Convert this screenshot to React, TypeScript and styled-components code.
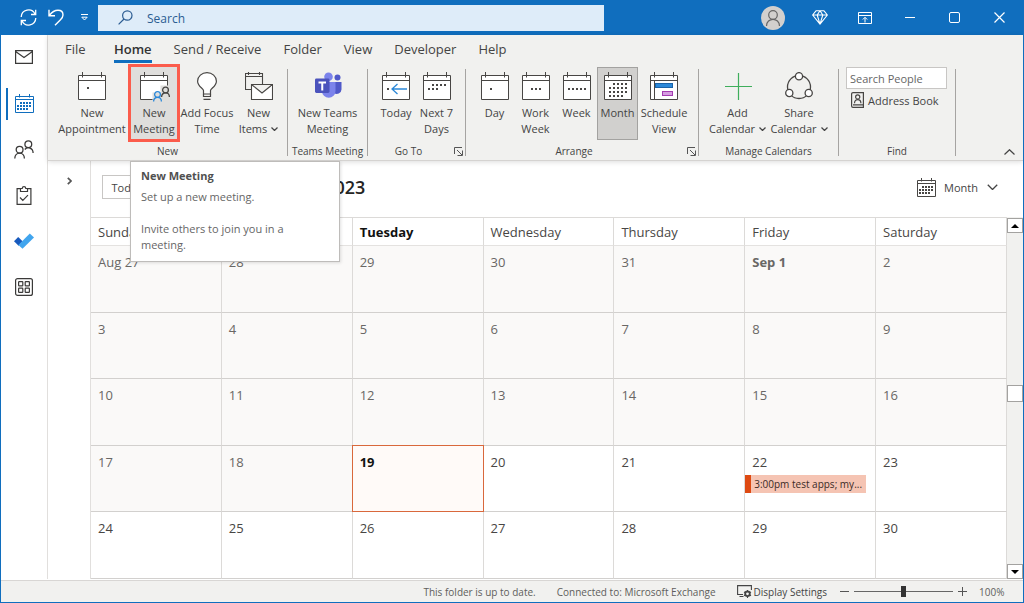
import React from "react";
import styled, { createGlobalStyle, css } from "styled-components";

const GlobalStyle = createGlobalStyle`
  *, *::before, *::after { box-sizing: border-box; }
  body { margin: 0; font-family: "Open Sans", "Noto Sans", sans-serif; font-size: 11px; color: #444; }
  button, input, select { font: inherit; color: inherit; margin: 0; padding: 0; border: 0; background: none; }
  svg { display: block; flex: none; }
`;

const Window = styled.div`
  display: flex;
  flex-direction: column;
  height: 100vh;
  min-height: 520px;
  overflow: hidden;
  border: 1px solid #106ebe;
  border-top: 0;
  background: #fff;
`;

/* ---------- title bar ---------- */

const TitleBar = styled.header`
  display: flex;
  align-items: center;
  flex: none;
  height: 35px;
  padding: 0 1px 0 13px;
  background: #106ebe;
  color: #fff;
`;

const QuickButton = styled.button`
  display: grid;
  place-items: center;
  width: 28px;
  height: 28px;
`;

const SearchBox = styled.label`
  display: flex;
  align-items: center;
  gap: 14px;
  flex: 0 1 506px;
  height: 26px;
  padding-left: 20px;
  background: #deecf9;
  color: #2b5c92;
  font-size: 12px;

  input { flex: 1; min-width: 0; padding-top: 2px; outline: 0; }
  input::placeholder { color: #2b5c92; opacity: 1; }
`;

const WindowControls = styled.div`
  display: flex;
  margin-left: auto;
`;

const ControlButton = styled.button<{ $avatar?: boolean }>`
  display: grid;
  place-items: center;
  width: 45px;
  height: 34px;
  ${(p) => p.$avatar && css`margin-right: 2px;`}
`;

/* ---------- main regions ---------- */

const Body = styled.div`
  display: flex;
  flex: 1;
  min-height: 0;
`;

const Rail = styled.nav`
  display: flex;
  flex-direction: column;
  flex: none;
  width: 47px;
  border-right: 1px solid #e1dfdd;
`;

const RailButton = styled.button<{ $active?: boolean }>`
  && { padding-bottom: 2px; }
  position: relative;
  display: grid;
  place-items: center;
  height: 46px;
  ${(p) => p.$active && css`
    &::before {
      content: "";
      position: absolute;
      left: 5px;
      top: 7px;
      width: 2px;
      height: 32px;
      background: #106ebe;
    }
  `}
`;

const Content = styled.div`
  display: flex;
  flex-direction: column;
  flex: 1;
  min-width: 0;
`;

/* ---------- ribbon ---------- */

const Ribbon = styled.section`
  position: relative;
  z-index: 1;
  flex: none;
  height: 126px;
  background: #f1f1ef;
  border-bottom: 1px solid #d5d3d1;
  box-shadow: 0 1px 5px rgba(0, 0, 0, 0.14);
`;

const Tabs = styled.div`
  display: flex;
  gap: 22px;
  height: 32px;
  padding-left: 17px;
`;

const Tab = styled.button<{ $active?: boolean }>`
  && { padding-top: 3px; border-bottom: 3px solid ${(p) => (p.$active ? "#106ebe" : "transparent")}; }
  height: 28px;
  min-width: 27px;
  font-size: 13px;
  line-height: 20px;
  text-align: left;
  ${(p) => p.$active && css`
    && { font-weight: 600; color: #333; }
  `}
`;

const Groups = styled.div`
  display: flex;
`;

const Group = styled.div`
  display: flex;
  flex-direction: column;
  justify-content: space-between;
  height: 92px;
`;

const Tools = styled.div<{ $end?: number }>`
  display: flex;
  padding: 0 ${(p) => p.$end ?? 8}px 0 8px;
`;

const Divider = styled.div`
  flex: none;
  width: 1px;
  height: 87px;
  margin-top: 2px;
  background: #a6a4a2;
`;

const GroupFooter = styled.div`
  display: flex;
  align-items: center;
  height: 16px;
  font-size: 10px;
  span { flex: 1; text-align: center; white-space: nowrap; }
`;

const Launcher = styled.button`
  && { padding-right: 2px; }
  display: grid;
  justify-items: end;
  align-items: center;
  width: 16px;
  height: 12px;
`;

const ToolSlot = styled.div`
  position: relative;
`;

const Tool = styled.button<{ $w: number; $pressed?: boolean; $marked?: boolean }>`
  && { padding-top: 5px; }
  position: relative;
  display: flex;
  flex-direction: column;
  align-items: center;
  gap: 5px;
  width: ${(p) => p.$w}px;
  height: 73px;
  line-height: 16px;
  white-space: nowrap;
  ${(p) => p.$pressed && css`
    && { background: #d1d0ce; box-shadow: inset 0 0 0 1px #a3a2a0; }
  `}
  ${(p) => p.$marked && css`
    && { background: #dfdedc; }
    &::after {
      content: "";
      position: absolute;
      inset: -3px 0 -2px;
      border: 3px solid #fb5c4c;
    }
  `}
`;

const ToolLabel = styled.span`
  display: flex;
  flex-direction: column;
  align-items: center;
`;

const WithArrow = styled.span`
  display: flex;
  align-items: center;
  gap: 4px;
`;

const Tooltip = styled.div`
  position: absolute;
  top: 94px;
  left: 2px;
  width: 210px;
  height: 101px;
  padding: 6px 10px;
  background: #fff;
  border: 1px solid #bebcba;
  box-shadow: 1px 1px 3px rgba(0, 0, 0, 0.12);
  line-height: 16px;
  color: #666;
  h2 { margin: 0 0 5px; font-size: 11px; line-height: 16px; font-weight: 700; color: #505050; }
  p { margin: 0 0 16px; }
`;

const FindTools = styled.div`
  display: flex;
  flex-direction: column;
  align-items: flex-start;
  gap: 2px;
  width: 116px;
  padding: 0 8px 0 7px;
`;

const PeopleInput = styled.input`
  && {
    width: 101px;
    height: 22px;
    padding: 0 3px;
    background: #fff;
    border: 1px solid #c8c6c4;
  }
  &::placeholder { color: #666; opacity: 1; }
`;

const AddressButton = styled.button`
  && { padding-left: 5px; }
  display: flex;
  align-items: center;
  gap: 4px;
  height: 18px;
  white-space: nowrap;
`;

const CollapseButton = styled.button`
  && { margin-left: auto; }
  align-self: flex-end;
  width: 28px;
  height: 14px;
  display: grid;
  place-items: center;
`;

/* ---------- calendar ---------- */

const Main = styled.main`
  display: flex;
  flex: 1;
  min-height: 0;
`;

const FolderPane = styled.div`
  flex: none;
  width: 43px;
  border-right: 1px solid #e1dfdd;
`;

const ExpandButton = styled.button`
  display: grid;
  place-items: center;
  width: 100%;
  height: 40px;
`;

const Calendar = styled.div`
  display: flex;
  flex-direction: column;
  flex: 1;
  min-width: 0;
`;

const CalendarBar = styled.div`
  display: flex;
  align-items: center;
  flex: none;
  height: 56px;
  padding: 0 25px 4px 11px;
`;

const TodayButton = styled.button`
  && { border: 1px solid #c8c6c4; }
  width: 50px;
  height: 24px;
`;

const StepButton = styled.button`
  display: grid;
  place-items: center;
  width: 28px;
  height: 24px;
`;

const Heading = styled.h1`
  margin: 0 0 0 16px;
  font-size: 18px;
  line-height: 24px;
  font-weight: 600;
  color: #252423;
`;

const ViewPicker = styled.label`
  display: flex;
  align-items: center;
  gap: 8px;
  margin-left: auto;
  select { appearance: none; width: 35px; outline: 0; }
`;

const GridArea = styled.div`
  display: flex;
  flex: 1;
  min-height: 0;
`;

const MonthTable = styled.table`
  flex: 1;
  width: 100%;
  height: 100%;
  table-layout: fixed;
  border-collapse: separate;
  border-spacing: 0;
  border-top: 1px solid #dcdad8;
  font-size: 13px;
  line-height: 20px;
`;

const DayName = styled.th<{ $today?: boolean }>`
  height: 28px;
  padding: 1px 7px 0;
  border-right: 1px solid #dcdad8;
  border-bottom: 1px solid #e4e2e0;
  text-align: left;
  font-weight: ${(p) => (p.$today ? 700 : 400)};
  color: ${(p) => (p.$today ? "#111" : "#484644")};
`;

type CellKind = "past" | "today" | "future";

const DayCell = styled.td<{ $kind: CellKind; $bold?: boolean }>`
  position: relative;
  height: 66px;
  padding: 6px 0 0;
  border-right: 1px solid #dcdad8;
  border-bottom: 1px solid #d2d0ce;
  vertical-align: top;
  background: ${(p) => ({ past: "#faf9f8", today: "#fffaf8", future: "#fff" })[p.$kind]};
  color: ${(p) => ({ past: "#696765", today: "#111", future: "#484644" })[p.$kind]};
  font-weight: ${(p) => (p.$bold ? 700 : 400)};
  ${(p) => p.$kind === "today" && css`
    &::after {
      content: "";
      position: absolute;
      inset: -1px;
      border: 1px solid #d9683c;
    }
  `}
`;

const DayNumber = styled.div`
  padding-left: 7px;
`;

const EventButton = styled.button`
  && { border-left: 6px solid #de4a12; padding: 0 3px; background: #f5c4b3; }
  display: block;
  width: calc(100% - 9px);
  height: 18px;
  margin-top: 3px !important;
  overflow: hidden;
  text-overflow: ellipsis;
  white-space: nowrap;
  && { font-size: 10px; color: #3b2a25; }
  line-height: 16px;
  text-align: left;
`;

const ScrollBar = styled.div`
  display: flex;
  flex-direction: column;
  flex: none;
  width: 16px;
  padding-top: 1px;
  background: #f1f1ef;
`;

const ScrollButton = styled.button`
  && { border: 1px solid #a3a2a0; background: #fff; }
  display: grid;
  place-items: center;
  width: 16px;
  height: 15px;
`;

const ScrollGap = styled.div<{ $grow: number }>`
  flex: ${(p) => p.$grow};
`;

const ScrollThumb = styled.div`
  height: 17px;
  border: 1px solid #a3a2a0;
  background: #fff;
`;

/* ---------- status bar ---------- */

const StatusBar = styled.footer`
  display: flex;
  align-items: center;
  justify-content: flex-end;
  flex: none;
  height: 22px;
  margin-top: 1px;
  padding-right: 19px;
  border-top: 1px solid #d8d6d4;
  background: #f1f1ef;
  font-size: 10px;
  line-height: 16px;
  color: #605e5c;
  white-space: nowrap;
`;

const StatusText = styled.span`
  margin-right: 21px;
`;

const DisplayButton = styled.button`
  && { margin-right: 13px; color: #444; }
  display: flex;
  align-items: center;
  gap: 2px;
`;

const ZoomButton = styled.button`
  width: 9px;
  height: 16px;
  display: grid;
  place-items: center;
`;

const ZoomSlider = styled.input`
  && {
    margin: 0 5px;
    background: linear-gradient(#666, #666) center / 100% 1px no-repeat;
  }
  appearance: none;
  width: 99px;
  height: 12px;
  &::-webkit-slider-thumb { appearance: none; width: 5px; height: 11px; background: #333; }
`;

const ZoomValue = styled.span`
  width: 25px;
  margin-left: 12px;
`;

/* ---------- icons ---------- */

type Dot = [number, number];

const CalIcon = ({ dots = [], size = 28, color = "#484644", children }: {
  dots?: Dot[]; size?: number; color?: string; children?: React.ReactNode;
}) => (
  <svg width={size} height={size} viewBox="0 0 28 28" fill="none" stroke={color} overflow="visible">
    <path d="M.5 3.500h27v24H.5z" fill="#fff" />
    <path d="M.5 8.500h27M4.500 0v5.500M23.500 0v5.500" />
    {dots.map(([x, y]) => <rect key={`${x}-${y}`} x={x} y={y} width="2" height="2" fill={color} stroke="none" />)}
    {children}
  </svg>
);

const weekDots: Dot[] = [[5, 16], [9, 16], [13, 16], [17, 16], [21, 16]];
const monthDots: Dot[] = [
  [9, 11], [13, 11], [17, 11], [21, 11],
  [5, 15], [9, 15], [13, 15], [17, 15], [21, 15],
  [5, 19], [9, 19], [13, 19], [17, 19], [21, 19],
  [5, 23], [9, 23], [13, 23], [17, 23],
];

const SmallCalendar = ({ color }: { color: string }) => (
  <svg width="19" height="19" viewBox="0 0 19 19" fill="none" stroke={color}>
    <path d="M.5 2.500h18v16H.5zM.5 5.500h18M4.500 0v3.500M14.500 0v3.500" />
    <g fill={color} stroke="none">
      {[5, 8, 11, 14].map((x) => <rect key={x} x={x} y="8" width="2" height="2" />)}
      {[2, 5, 8, 11, 14].map((x) => <rect key={x} x={x} y="11" width="2" height="2" />)}
      {[2, 5, 8, 11].map((x) => <rect key={x} x={x} y="14" width="2" height="2" />)}
    </g>
  </svg>
);

const DownArrow = ({ w = 7, color = "currentColor" }: { w?: number; color?: string }) => (
  <svg width={w} height={w * 0.6} viewBox="0 0 10 6" fill="none" stroke={color} strokeWidth={w > 8 ? 1.2 : 1.8}>
    <path d="M.7.7 5 5 9.300.7" />
  </svg>
);

const Person = ({ x, y, color }: { x: number; y: number; color: string }) => (
  <g transform={`translate(${x} ${y})`} fill="none" stroke={color} strokeWidth="1.3">
    <circle cx="4.500" cy="3.500" r="2.900" />
    <path d="M.6 10.500c0-5.400 7.800-5.400 7.800 0" />
  </g>
);

const MeetingIcon = () => (
  <CalIcon>
    <path d="M12.500 28.500v-8h8v-7h8v15z" fill="#dfdedc" stroke="none" />
    <Person x={21} y={14.500} color="#484644" />
    <Person x={13} y={19} color="#2b88d8" />
  </CalIcon>
);

const BulbIcon = () => (
  <svg width="20" height="28" viewBox="0 0 20 28" fill="none" stroke="#484644" strokeWidth="1.200">
    <path d="M6.500 22v-3.500c0-2-5.900-4-5.900-9.300a9.400 8.600 0 0 1 18.800 0c0 5.300-5.900 7.300-5.900 9.300V22z" fill="#fff" />
    <path d="M6.500 22v2.500h7V22M6.500 27.400h7" />
  </svg>
);

const ItemsIcon = () => (
  <svg width="28" height="28" viewBox="0 0 28 28" fill="none" stroke="#484644" strokeWidth="1.100">
    <path d="M6.500 17.500h-6v-16h17V12M.5 4.500h17M3.500 0v3M14.500 0v3" />
    <path d="M6.500 12.500h21v15h-21zM6.500 12.500l10.500 8.500 10.500-8.500" fill="#fff" />
  </svg>
);

const TeamsIcon = () => (
  <svg width="28" height="28" viewBox="0 0 28 28">
    <circle cx="23.500" cy="5.500" r="3" fill="#5059c9" />
    <path d="M20 10h7.500v7.500a4.700 4.700 0 0 1-7.500 3.500z" fill="#5059c9" />
    <circle cx="14.500" cy="4.700" r="4.300" fill="#7b83eb" />
    <path d="M8 10h13.500v9a6.700 6.700 0 0 1-13.500 0z" fill="#7b83eb" />
    <rect x="1" y="6.500" width="14.500" height="14.500" rx="1.400" fill="#4b53bc" />
    <path d="M4.500 10.500h7.500M8.250 10.500v8" stroke="#fff" strokeWidth="2" />
  </svg>
);

const ShareIcon = () => (
  <svg width="28" height="28" viewBox="0 0 28 28" fill="none" stroke="#484644" strokeWidth="1.300">
    <circle cx="14" cy="15" r="11.500" />
    <g fill="#fff">
      <circle cx="14" cy="4.200" r="3.600" />
      <circle cx="4.300" cy="21" r="3.600" />
      <circle cx="23.700" cy="21" r="3.600" />
    </g>
  </svg>
);

const LauncherIcon = () => (
  <svg width="9" height="9" viewBox="0 0 9 9" fill="none" stroke="#555">
    <path d="M.5 7V.5H8M3 3l5 5M8.500 3.500v5h-5" />
  </svg>
);

/* ---------- content ---------- */

const ArrowLabel = ({ children }: { children: React.ReactNode }) => (
  <WithArrow>{children}<DownArrow /></WithArrow>
);

const Footer = ({ title, launcher }: { title: string; launcher?: boolean }) => (
  <GroupFooter>
    <span>{title}</span>
    {launcher && <Launcher aria-label={`${title} options`}><LauncherIcon /></Launcher>}
  </GroupFooter>
);

const ToolItem = ({ w, icon, lines, pressed, marked }: {
  w: number; icon: React.ReactNode; lines: React.ReactNode[]; pressed?: boolean; marked?: boolean;
}) => (
  <Tool $w={w} $pressed={pressed} $marked={marked}>
    {icon}
    <ToolLabel>{lines.map((line, i) => <span key={i}>{line}</span>)}</ToolLabel>
  </Tool>
);

const tabs = ["File", "Home", "Send / Receive", "Folder", "View", "Developer", "Help"];
const dayNames = ["Sunday", "Monday", "Tuesday", "Wednesday", "Thursday", "Friday", "Saturday"];
const weeks = [
  ["Aug 27", "28", "29", "30", "31", "Sep 1", "2"],
  ["3", "4", "5", "6", "7", "8", "9"],
  ["10", "11", "12", "13", "14", "15", "16"],
  ["17", "18", "19", "20", "21", "22", "23"],
  ["24", "25", "26", "27", "28", "29", "30"],
];
const TODAY = 3 * 7 + 2;

export default function App() {
  return (
    <>
      <GlobalStyle />
      <Window>
        <TitleBar>
          <QuickButton aria-label="Sync">
            <svg width="17" height="17" viewBox="0 0 17 17" fill="none" stroke="#fff" strokeWidth="1.300">
              <path d="M1.200 8A7.300 7.300 0 0 1 15 5M15.800 9A7.300 7.300 0 0 1 2 12M15.700.8v4.700H11M1.300 16.200v-4.700H6" />
            </svg>
          </QuickButton>
          <QuickButton aria-label="Undo">
            <svg width="16" height="17" viewBox="0 0 16 17" fill="none" stroke="#fff" strokeWidth="1.400">
              <path d="M1 .8v6h6M1.300 6.500C4 3 7 1.300 10 1.300c3 0 5 2 5 4.700 0 2-1 3.200-2.500 4.700L7 16.300" />
            </svg>
          </QuickButton>
          <QuickButton aria-label="Customize toolbar">
            <svg width="7" height="7" viewBox="0 0 7 7" fill="none" stroke="#fff">
              <path d="M0 .5h7M.8 3.200h5.400L3.500 6z" />
            </svg>
          </QuickButton>
          <SearchBox>
            <svg width="15" height="15" viewBox="0 0 15 15" fill="none" stroke="#2b5c92" strokeWidth="1.200">
              <circle cx="9.300" cy="5.500" r="4.700" /><path d="M6 9 .6 14.400" />
            </svg>
            <input placeholder="Search" aria-label="Search" />
          </SearchBox>
          <WindowControls>
            <ControlButton $avatar aria-label="Account">
              <svg width="24" height="24" viewBox="0 0 24 24" fill="none" stroke="#666" strokeWidth="1.200">
                <circle cx="12" cy="12" r="12" fill="#d2d0ce" stroke="none" />
                <circle cx="12" cy="9" r="4.300" /><path d="M5.500 20c0-8.900 13-8.900 13 0" />
              </svg>
            </ControlButton>
            <ControlButton aria-label="Premium">
              <svg width="16" height="15" viewBox="0 0 16 15" fill="none" stroke="#fff" strokeLinejoin="round" strokeWidth="1.100">
                <path d="M4 .8h8L15.400 5 8 14.200.6 5zM.6 5h14.800M5.200 5 8 14.200 10.800 5M5.200 5 8 .8 10.800 5" />
              </svg>
            </ControlButton>
            <ControlButton aria-label="Ribbon display options">
              <svg width="14" height="12" viewBox="0 0 14 12" fill="none" stroke="#fff">
                <path d="M.5.5h13v11H.5zM.5 3.500h13M7 10.500v-5M4.800 7.500 7 5.300l2.200 2.200" />
              </svg>
            </ControlButton>
            <ControlButton aria-label="Minimize">
              <svg width="10" height="2" viewBox="0 0 10 2"><path d="M0 .5h10" stroke="#fff" /></svg>
            </ControlButton>
            <ControlButton aria-label="Maximize">
              <svg width="11" height="11" viewBox="0 0 11 11" fill="none" stroke="#fff"><rect x=".5" y=".5" width="10" height="10" rx="1.500" /></svg>
            </ControlButton>
            <ControlButton aria-label="Close">
              <svg width="11" height="11" viewBox="0 0 11 11" fill="none" stroke="#fff" strokeWidth="1.200"><path d="m.5.5 10 10m0-10-10 10" /></svg>
            </ControlButton>
          </WindowControls>
        </TitleBar>

        <Body>
          <Rail>
            <RailButton aria-label="Mail">
              <svg width="18" height="14" viewBox="0 0 18 14" fill="none" stroke="#3b3a39" strokeWidth="1.200"><path d="M.6.6h16.800v12.800H.6zM.6 1.500 9 7.500l8.400-6" /></svg>
            </RailButton>
            <RailButton $active aria-label="Calendar"><SmallCalendar color="#106ebe" /></RailButton>
            <RailButton aria-label="People">
              <svg width="20" height="19" viewBox="0 0 20 19" fill="none" stroke="#3b3a39" strokeWidth="1.300">
                <circle cx="5.600" cy="9.700" r="3.400" /><path d="M.8 18.500c0-7.200 9.600-7.200 9.600 0" />
                <circle cx="14.300" cy="4.200" r="3.400" /><path d="M10.800 9.500c2.800-3.500 8.300-1.600 8.300 3.500" />
              </svg>
            </RailButton>
            <RailButton aria-label="Tasks">
              <svg width="16" height="19" viewBox="0 0 16 19" fill="none" stroke="#3b3a39" strokeWidth="1.200">
                <path d="M4.500 2.600H1.100v15.800h13.800V2.600h-3.400M4.500 5.500v-3H6.200C6.400 0 9.600 0 9.800 2.500h1.700v3zM4 11.500l2.800 2.800 5.200-5.200" />
              </svg>
            </RailButton>
            <RailButton aria-label="To Do">
              <svg width="20" height="16" viewBox="0 0 20 16">
                <path d="m0 8.200 4.200-4.200 4.600 4.600-4.200 4.200z" fill="#185abd" />
                <path d="M4.400 12 15.800.6 20 4.400 8.500 15.800z" fill="#41a5ee" />
              </svg>
            </RailButton>
            <RailButton aria-label="More apps">
              <svg width="18" height="18" viewBox="0 0 18 18" fill="none" stroke="#3b3a39" strokeWidth="1.200">
                <rect x=".6" y=".6" width="16.800" height="16.800" rx="2" />
                <rect x="3.600" y="3.600" width="4.200" height="4.200" rx=".6" /><rect x="10.200" y="3.600" width="4.200" height="4.200" rx=".6" />
                <rect x="3.600" y="10.200" width="4.200" height="4.200" rx=".6" /><rect x="10.200" y="10.200" width="4.200" height="4.200" rx=".6" />
              </svg>
            </RailButton>
          </Rail>

          <Content>
            <Ribbon>
              <Tabs>{tabs.map((t) => <Tab key={t} $active={t === "Home"}>{t}</Tab>)}</Tabs>
              <Groups>
                <Group>
                  <Tools $end={4}>
                    <ToolItem w={72} icon={<CalIcon dots={[[9, 15]]} />} lines={["New", "Appointment"]} />
                    <ToolSlot>
                      <ToolItem w={52} marked icon={<MeetingIcon />} lines={["New", "Meeting"]} />
                      <Tooltip role="tooltip">
                        <h2>New Meeting</h2>
                        <p>Set up a new meeting.</p>
                        <p>Invite others to join you in a meeting.</p>
                      </Tooltip>
                    </ToolSlot>
                    <ToolItem w={54} icon={<BulbIcon />} lines={["Add Focus", "Time"]} />
                    <ToolItem w={49} icon={<ItemsIcon />} lines={["New", <ArrowLabel>Items</ArrowLabel>]} />
                  </Tools>
                  <Footer title="New" />
                </Group>
                <Divider />
                <Group>
                  <Tools>
                    <ToolItem w={63} icon={<TeamsIcon />} lines={["New Teams", "Meeting"]} />
                  </Tools>
                  <Footer title="Teams Meeting" />
                </Group>
                <Divider />
                <Group>
                  <Tools>
                    <ToolItem w={40} lines={["Today"]} icon={
                      <CalIcon dots={[[5, 16]]}><path d="M25 17H10m5.500-5L10 17l5.500 5" stroke="#2b88d8" strokeWidth="1.300" /></CalIcon>
                    } />
                    <ToolItem w={41} lines={["Next 7", "Days"]} icon={
                      <CalIcon dots={[[9, 12], [13, 12], [17, 12], [21, 12], [5, 16], [9, 16], [13, 16]]} />
                    } />
                  </Tools>
                  <Footer title="Go To" launcher />
                </Group>
                <Divider />
                <Group>
                  <Tools>
                    <ToolItem w={41} icon={<CalIcon dots={[[9, 16]]} />} lines={["Day"]} />
                    <ToolItem w={41} icon={<CalIcon dots={[[9, 16], [13, 16], [17, 16]]} />} lines={["Work", "Week"]} />
                    <ToolItem w={41} icon={<CalIcon dots={weekDots} />} lines={["Week"]} />
                    <ToolItem w={41} pressed icon={<CalIcon dots={monthDots} />} lines={["Month"]} />
                    <ToolItem w={52} lines={["Schedule", "View"]} icon={
                      <CalIcon>
                        <path d="M4.500 9v18" />
                        <rect x="5.500" y="11.500" width="17" height="4" fill="#2b88d8" stroke="#1a63a8" />
                        <rect x="12.500" y="19.500" width="10" height="4" fill="#d59de0" stroke="#a33bb0" />
                      </CalIcon>
                    } />
                  </Tools>
                  <Footer title="Arrange" launcher />
                </Group>
                <Divider />
                <Group>
                  <Tools>
                    <ToolItem w={61} lines={["Add", <ArrowLabel>Calendar</ArrowLabel>]} icon={
                      <svg width="28" height="28" viewBox="0 0 28 28"><path d="M14.500 1v27M1 14.500h27" stroke="#3fae5c" strokeWidth="1.200" /></svg>
                    } />
                    <ToolItem w={62} icon={<ShareIcon />} lines={["Share", <ArrowLabel>Calendar</ArrowLabel>]} />
                  </Tools>
                  <Footer title="Manage Calendars" />
                </Group>
                <Divider />
                <Group>
                  <FindTools>
                    <PeopleInput placeholder="Search People" aria-label="Search People" />
                    <AddressButton>
                      <svg width="13" height="16" viewBox="0 0 13 16" fill="none" stroke="#484644" strokeWidth="1.200">
                        <path d="M12.400 12.500V.6H2A1.400 1.400 0 0 0 .6 2v12A1.400 1.400 0 0 0 2 15.400h10.400v-2.600H2" />
                        <circle cx="6.700" cy="4.900" r="2.100" /><path d="M3.500 11.300c0-5 6.400-5 6.400 0" />
                      </svg>
                      Address Book
                    </AddressButton>
                  </FindTools>
                  <Footer title="Find" />
                </Group>
                <Divider />
                <CollapseButton aria-label="Collapse ribbon">
                  <svg width="11" height="6" viewBox="0 0 11 6" fill="none" stroke="#444" strokeWidth="1.200"><path d="M.5 5.500l5-4.800 5 4.800" /></svg>
                </CollapseButton>
              </Groups>
            </Ribbon>

            <Main>
              <FolderPane>
                <ExpandButton aria-label="Expand folder pane">
                  <svg width="5" height="8" viewBox="0 0 5 8" fill="none" stroke="#555" strokeWidth="1.700"><path d="m.8.8 3.200 3.200L.8 7.200" /></svg>
                </ExpandButton>
              </FolderPane>
              <Calendar>
                <CalendarBar>
                  <TodayButton>Today</TodayButton>
                  <StepButton aria-label="Previous month">‹</StepButton>
                  <StepButton aria-label="Next month">›</StepButton>
                  <Heading>September 2023</Heading>
                  <ViewPicker>
                    <SmallCalendar color="#484644" />
                    <select aria-label="View" defaultValue="Month">
                      <option>Month</option>
                    </select>
                    <DownArrow w={11} />
                  </ViewPicker>
                </CalendarBar>
                <GridArea>
                  <MonthTable>
                    <thead>
                      <tr>{dayNames.map((d) => <DayName key={d} $today={d === "Tuesday"}>{d}</DayName>)}</tr>
                    </thead>
                    <tbody>
                      {weeks.map((week, w) => (
                        <tr key={w}>
                          {week.map((label, d) => {
                            const i = w * 7 + d;
                            const kind: CellKind = i === TODAY ? "today" : i < TODAY ? "past" : "future";
                            return (
                              <DayCell key={label} $kind={kind} $bold={kind === "today" || label === "Sep 1"}>
                                <DayNumber>{label}</DayNumber>
                                {label === "22" && <EventButton>3:00pm test apps; my...</EventButton>}
                              </DayCell>
                            );
                          })}
                        </tr>
                      ))}
                    </tbody>
                  </MonthTable>
                  <ScrollBar>
                    <ScrollButton aria-label="Scroll up"><svg width="8" height="4" viewBox="0 0 8 4"><path d="M0 4l4-4 4 4z" /></svg></ScrollButton>
                    <ScrollGap $grow={152} />
                    <ScrollThumb />
                    <ScrollGap $grow={162} />
                    <ScrollButton aria-label="Scroll down"><svg width="8" height="4" viewBox="0 0 8 4"><path d="M0 0l4 4 4-4z" /></svg></ScrollButton>
                  </ScrollBar>
                </GridArea>
              </Calendar>
            </Main>
          </Content>
        </Body>

        <StatusBar>
          <StatusText>This folder is up to date.</StatusText>
          <StatusText>Connected to: Microsoft Exchange</StatusText>
          <DisplayButton>
            <svg width="15" height="13" viewBox="0 0 15 13" fill="none" stroke="#444" strokeWidth="1.100">
              <path d="M6 9.500H.6V.6h13.800V5M2.500 11.500h4" />
              <circle cx="10.500" cy="8.800" r="2.300" strokeWidth="1.800" />
              <path d="M10.500 5v1.500M10.500 11v2M7 7l1.500.8M12.500 9.800 14 10.700M14 7l-1.500.8M8.500 9.800 7 10.700" />
            </svg>
            Display Settings
          </DisplayButton>
          <ZoomButton aria-label="Zoom out"><svg width="9" height="9" viewBox="0 0 9 9"><path d="M0 4.500h9" stroke="#555" /></svg></ZoomButton>
          <ZoomSlider type="range" min={0} max={100} defaultValue={50} aria-label="Zoom" />
          <ZoomButton aria-label="Zoom in"><svg width="9" height="9" viewBox="0 0 9 9"><path d="M0 4.500h9M4.500 0v9" stroke="#555" /></svg></ZoomButton>
          <ZoomValue>100%</ZoomValue>
        </StatusBar>
      </Window>
    </>
  );
}
